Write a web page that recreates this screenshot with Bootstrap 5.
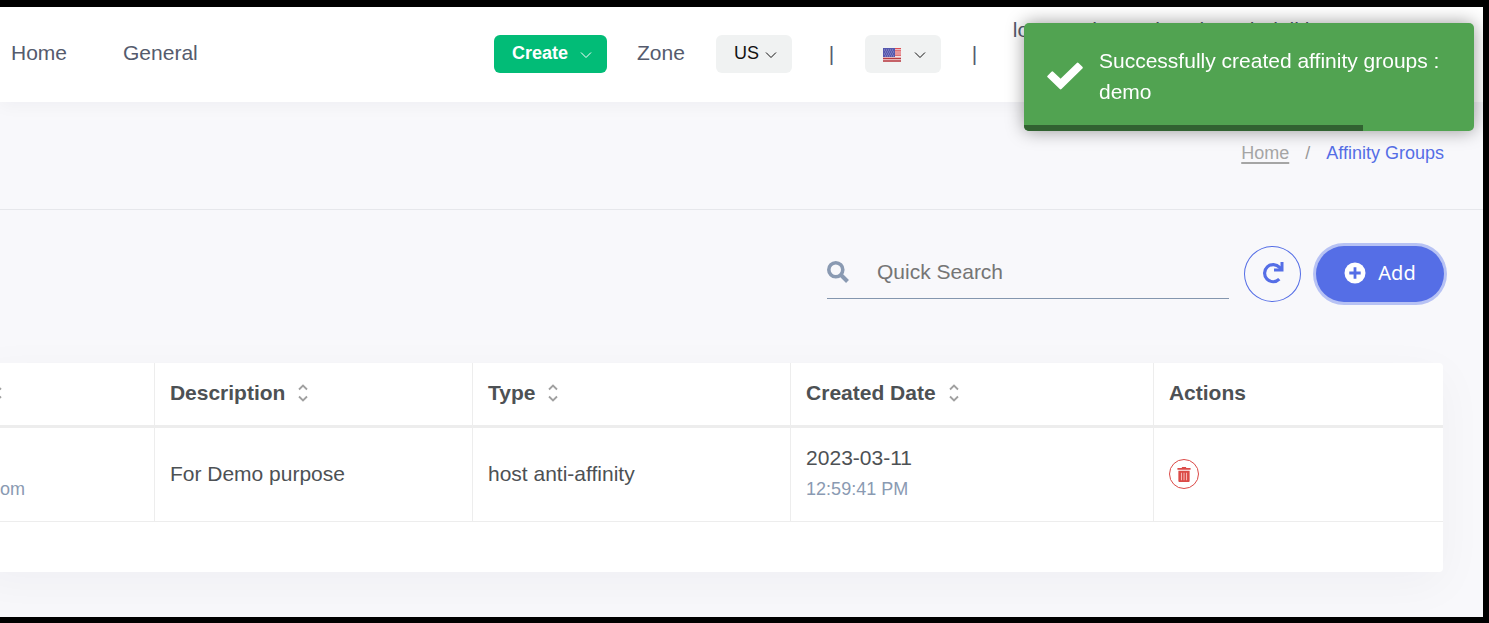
<!DOCTYPE html>
<html lang="en">
<head>
<meta charset="utf-8">
<meta name="viewport" content="width=device-width, initial-scale=1">
<title>Affinity Groups</title>
<link rel="stylesheet" href="https://cdn.jsdelivr.net/npm/bootstrap@5.3.0/dist/css/bootstrap.min.css">
<style>
  :root { --accent: #556ee6; --line: #ededed; --muted: #8a9ab2; }
  body {
    font-family: "Liberation Sans", Arial, sans-serif;
    font-size: 21px; line-height: 31px; color: #4d5154;
    background: #f8f8fb; min-height: 100vh; overflow: hidden;
    border: solid #000; border-width: 7px 6px 6px 0;
  }
  .topbar { background: #fff; height: 95px; padding: 0 11px 2px; box-shadow: 0 4px 16px rgba(18, 38, 63, .04); }
  .topbar a { color: #555b6d; text-decoration: none; padding-bottom: 2px; }
  .topbar .main-links { gap: 56px; }
  .topbar .tools { margin-right: 470px; }
  .account { position: absolute; top: 7px; right: 162px; white-space: nowrap; }
  .pill-btn { height: 38px; border: 0; border-radius: 6px; font-size: 18px; line-height: 20px; padding: 0 14px 2px 18px; }
  .btn-create, .btn-create:hover { width: 113px; background: #02bc77; color: #fff; font-weight: 700; }
  .btn-soft, .btn-soft:hover { background: #f0f2f2; color: #111; }
  .zone-label { margin-left: 26px; width: 79px; padding-bottom: 2px; }
  .btn-create { margin-right: 4px; }
  .zone-btn, .flag-btn { width: 76px; padding-right: 13px; }
  .bar-mark { width: 73px; text-align: center; padding: 0 0 1px 6px; color: #555b6d; }
  .bar-mark:last-child { width: 61px; }
  .crumbs { height: 108px; padding: 36px 39px 0 0; border-bottom: 1px solid #e6e7eb; font-size: 18px; }
  .crumbs .breadcrumb-item + .breadcrumb-item { padding-left: 16px; }
  .crumbs .breadcrumb-item + .breadcrumb-item::before { padding-right: 16px; color: #999; }
  .crumbs a { color: #a5a5a5; text-underline-offset: 3px; text-decoration-thickness: 2px; }
  .crumbs .active { color: var(--accent); }
  .actionbar { padding: 36px 39px 0 0; }
  .search-field { width: 402px; height: 53px; border-bottom: 1px solid #8496ae; margin-right: 15px; }
  .search-field input { border: 0; outline: 0; background: transparent; padding: 0 0 2px; margin-left: 28px; min-width: 0; flex: 1; }
  .search-field input::placeholder { color: #757575; opacity: 1; }
  .btn-refresh { width: 57px; height: 56px; border: 1px solid var(--accent); border-radius: 50%; color: var(--accent); padding: 0 0 2px; margin-right: 15px; }
  .btn-add, .btn-add:hover { width: 128px; height: 56px; border: 0; border-radius: 28px; background: var(--accent); color: #fff; font-family: "Noto Sans", sans-serif; font-size: 20px; padding-bottom: 8px; box-shadow: 0 0 0 3px #b7c2f4; }
  .panel { margin: 61px 40px 0 -23px; background: #fff; border-radius: 4px; padding-bottom: 50px; box-shadow: 0 12px 48px rgba(18, 38, 63, .04); }
  .grid-table { table-layout: fixed; --bs-table-color: #4d5154; --bs-table-bg: transparent; }
  .grid-table th, .grid-table td { padding: 0 15px 2px; border: 0 solid var(--line); border-right-width: 1px; vertical-align: middle; }
  .grid-table th:last-child, .grid-table td:last-child { border-right-width: 0; }
  .grid-table th { height: 63px; border-bottom-width: 3px; }
  .grid-table td { height: 95px; border-bottom-width: 1px; }
  .grid-table td.stacked { padding-bottom: 0; }
  .grid-table .sub { color: var(--muted); font-size: 18px; line-height: 33px; display: block; }
  .sorter { width: 10px; height: 18px; margin: 0 0 4px 13px; }
  .grid-table .owner { padding-left: 8px; padding-top: 31px; }
  .btn-trash { width: 30px; height: 30px; border: 1px solid #db4a47; border-radius: 50%; color: #db4a47; background: #fff; padding: 0; }
  .notice { position: fixed; z-index: 5; top: 23px; right: 15px; width: 450px; height: 108px; padding: 0 20px 2px 23px; background: #51a351; color: #fff; border-radius: 5px; overflow: hidden; box-shadow: 0 0 18px rgba(0, 0, 0, .4); }
  .notice .timer { position: absolute; left: 0; bottom: 0; height: 6px; background: #316231; }
</style>
</head>
<body>
<header class="topbar d-flex align-items-center justify-content-between position-relative">
  <nav class="main-links d-flex" aria-label="Main">
    <a href="#">Home</a>
    <a href="#">General</a>
  </nav>
  <div class="tools d-flex align-items-center">
    <button type="button" class="btn pill-btn btn-create d-flex align-items-center justify-content-between">Create
      <svg class="mt-1" width="14" height="14" viewBox="0 0 14 14" fill="none" stroke="currentColor"><path d="M2 4.5 7 9.5 12 4.5"/></svg>
    </button>
    <span class="zone-label"><a href="#">Zone</a></span>
    <button type="button" class="btn pill-btn btn-soft d-flex align-items-center justify-content-between zone-btn">US
      <svg class="mt-1" width="16" height="14" viewBox="0 0 14 14" fill="none" stroke="currentColor"><path d="M2 4.5 7 9.5 12 4.5"/></svg>
    </button>
    <span class="bar-mark">|</span>
    <button type="button" class="btn pill-btn btn-soft d-flex align-items-center justify-content-between flag-btn" aria-label="Language">
      <svg class="mt-1" width="18" height="14" viewBox="0 0 18 14"><path fill="#f5dfe2" d="M0 0h18v14H0z"/><path stroke="#dc4d52" stroke-width="1.2" d="M0 .6h18M0 2.8h18M0 5h18M0 7.2h18"/><path stroke="#b53a40" stroke-width="1.4" d="M0 10.5h18M0 13h18"/><path fill="#5658ae" d="M0 0h12v9H0z"/><path stroke="#a9abd8" stroke-width=".8" stroke-dasharray="1 1" d="M1 2h10M2 4h9M1 6h10M2 8h9"/></svg>
      <svg class="mt-1" width="16" height="14" viewBox="0 0 14 14" fill="none" stroke="currentColor"><path d="M2 4.5 7 9.5 12 4.5"/></svg>
    </button>
    <span class="bar-mark">|</span>
  </div>
  <a href="#" class="account">longtext.kumar.laxmi.test.balaji.in</a>
</header>

<main>
  <nav class="crumbs" aria-label="Breadcrumb">
    <ol class="breadcrumb justify-content-end m-0">
      <li class="breadcrumb-item"><a href="#">Home</a></li>
      <li class="breadcrumb-item active" aria-current="page">Affinity Groups</li>
    </ol>
  </nav>

  <div class="actionbar d-flex justify-content-end">
    <label class="search-field d-flex align-items-center">
      <svg width="22" height="22" viewBox="0 0 22 22" fill="none" stroke="#8a9ab2"><circle cx="8.8" cy="8.8" r="7" stroke-width="3.6"/><path d="m14 14 6.5 6.5" stroke-width="4"/></svg>
      <input type="search" placeholder="Quick Search" aria-label="Quick Search">
    </label>
    <button type="button" class="btn btn-refresh d-flex align-items-center justify-content-center" aria-label="Refresh">
      <svg width="22" height="22" viewBox="0 0 22 22" fill="none" stroke="currentColor" stroke-width="3.2"><path d="M17.3 17.2A8.6 8.6 0 1 1 17.6 5.4L19 7"/><path d="M20 0v8H12" stroke-width="3"/></svg>
    </button>
    <button type="button" class="btn btn-add d-flex align-items-center justify-content-center">
      <svg class="me-2" width="22" height="22" viewBox="0 0 22 22"><circle cx="11" cy="11" r="10.5" fill="#fff"/><path d="M11 5.3v11.4M5.3 11h11.4" stroke="#556ee6" stroke-width="2.8"/></svg>
      <span class="ms-1">Add</span>
    </button>
  </div>

  <section class="panel">
    <table class="table grid-table m-0">
      <colgroup><col style="width:12.1%"><col style="width:21.7%"><col style="width:21.7%"><col style="width:24.75%"><col></colgroup>
      <thead>
        <tr>
          <th scope="col" aria-label="Name"><svg class="sorter ms-0" viewBox="0 0 10 18" fill="none" stroke="#a0a0a0" stroke-width="1.8"><path d="M1 5.500 5 1.500 9 5.500M1 12.500l4 4 4-4"/></svg></th>
          <th scope="col">Description<svg class="sorter" viewBox="0 0 10 18" fill="none" stroke="#a0a0a0" stroke-width="1.8"><path d="M1 5.500 5 1.500 9 5.500M1 12.500l4 4 4-4"/></svg></th>
          <th scope="col">Type<svg class="sorter" viewBox="0 0 10 18" fill="none" stroke="#a0a0a0" stroke-width="1.8"><path d="M1 5.500 5 1.500 9 5.500M1 12.500l4 4 4-4"/></svg></th>
          <th scope="col">Created Date<svg class="sorter" viewBox="0 0 10 18" fill="none" stroke="#a0a0a0" stroke-width="1.8"><path d="M1 5.500 5 1.500 9 5.500M1 12.500l4 4 4-4"/></svg></th>
          <th scope="col">Actions</th>
        </tr>
      </thead>
      <tbody>
        <tr>
          <td class="stacked"><span class="sub owner">om</span></td>
          <td>For Demo purpose</td>
          <td>host anti-affinity</td>
          <td class="stacked">2023-03-11<span class="sub">12:59:41 PM</span></td>
          <td class="stacked">
            <button type="button" class="btn btn-trash d-flex align-items-center justify-content-center" aria-label="Delete">
              <svg width="14" height="15" viewBox="0 0 14 16" fill="currentColor"><path d="M4.500 1 5 0h4l.5 1H14v2H0V1zM1 4h12v11a1 1 0 0 1-1 1H2a1 1 0 0 1-1-1z"/><path d="M4.300 6v8M7 6v8M9.700 6v8" stroke="#f6b8b6" stroke-width="1.100"/></svg>
            </button>
          </td>
        </tr>
      </tbody>
    </table>
  </section>
</main>

<div class="notice d-flex align-items-center" role="status">
  <svg class="flex-shrink-0 me-3" width="36" height="28" viewBox="0 0 37 28" fill="#fff" stroke="#fff" stroke-width="2.500" stroke-linejoin="round"><path d="M1.500 14.500 5.500 10.500 14 18.500 31.500 1.500 35.500 5.500 14 26.500z"/></svg>
  <div>Successfully created affinity groups : demo</div>
  <div class="timer" style="width:75.3%"></div>
</div>
<script src="https://cdn.jsdelivr.net/npm/bootstrap@5.3.0/dist/js/bootstrap.bundle.min.js"></script>
</body>
</html>
